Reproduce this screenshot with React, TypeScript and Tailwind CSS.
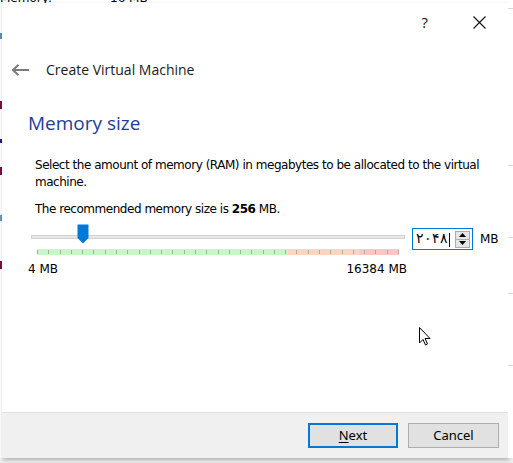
import type { FC } from 'react';

const TICKS = Array.from({ length: 33 }, (_, i) => i);

const SpinArrows: FC = () => (
  <div className="flex flex-col w-[15px] h-[17px] border border-[#adadad] bg-[#e6e6e6]">
    <div className="flex-1 flex items-center justify-center border-b border-[#adadad]">
      <svg width="7" height="4" viewBox="0 0 7 4">
        <path d="M0 4 L3.5 0 L7 4 Z" fill="#000" />
      </svg>
    </div>
    <div className="flex-1 flex items-center justify-center">
      <svg width="7" height="4" viewBox="0 0 7 4">
        <path d="M0 0 L3.5 4 L7 0 Z" fill="#000" />
      </svg>
    </div>
  </div>
);

const App: FC = () => {
  return (
    <div className="relative w-[513px] h-[463px] overflow-hidden bg-white" style={{ fontFamily: '"Open Sans", "Noto Sans", sans-serif' }}>
      {/* --- BACKGROUND WINDOW SLIVER --- */}
      <div className="h-[3px] overflow-hidden text-[12px] text-black" style={{ fontFamily: '"DejaVu Sans", sans-serif' }}>
        <div className="flex -mt-[11px]">
          <span className="w-[110px]">Memory:</span>
          <span>16 MB</span>
        </div>
      </div>

      <div className="flex h-[455px]">
        <div className="w-[2px] flex flex-col">
          <div className="h-[30px]" />
          <div className="h-[6px] bg-[#5c8fb5]" />
          <div className="h-[62px]" />
          <div className="h-[8px] bg-[#7a1040]" />
          <div className="h-[30px]" />
          <div className="h-[4px] bg-[#1a237e]" />
          <div className="h-[24px]" />
          <div className="h-[8px] bg-[#7a1040]" />
          <div className="h-[40px]" />
          <div className="h-[6px] bg-[#6a9cc0]" />
          <div className="h-[40px]" />
          <div className="h-[8px] bg-[#7a1040]" />
          <div className="flex-1" />
        </div>

        {/* --- DIALOG --- */}
        <div className="w-[506px] flex flex-col bg-white shadow-[1px_2px_4px_rgba(0,0,0,0.25)]">
          <div className="h-[39px] flex items-center justify-end pr-[22px] gap-[45px] text-[#111]">
            <span className="text-[15px] leading-none">?</span>
            <svg width="13" height="13" viewBox="0 0 13 13">
              <path d="M0.5 0.5 L12.5 12.5 M12.5 0.5 L0.5 12.5" stroke="#111" strokeWidth="1.1" />
            </svg>
          </div>

          <div className="h-[14px]" />
          <div className="flex items-center h-[28px] pl-[10px]">
            <svg width="18" height="12" viewBox="0 0 18 12">
              <path d="M1 6 H17 M6.5 0.8 L1 6 L6.5 11.2" stroke="#7c7c7c" strokeWidth="2" fill="none" />
            </svg>
            <span className="ml-[16px] text-[14px] text-[#1a1a1a] leading-none">Create Virtual Machine</span>
          </div>

          <div className="pl-[26px] mt-[25px] text-[19px] leading-[28px] text-[#1d3d96]">Memory size</div>

          <div className="flex flex-col pl-[33px] mt-[20px] text-[12px] text-black" style={{ fontFamily: '"DejaVu Sans", sans-serif' }}>
            <p className="leading-[17px] tracking-[-0.47px]">
              Select the amount of memory (RAM) in megabytes to be allocated to the virtual
              <br />
              machine.
            </p>
            <p className="mt-[10px] leading-[17px] tracking-[-0.47px]">
              The recommended memory size is <b>256</b> MB.
            </p>

            {/* --- SLIDER ROW --- */}
            <div className="flex items-start mt-[8px] -ml-[4px]">
              <div className="flex flex-col w-[376px]">
                <div className="relative h-[22px] flex items-center">
                  <div className="w-[374px] h-[4px] bg-[#e7e7e7] border border-[#d3d3d3]" />
                  <svg className="absolute left-[46px] top-[-2px]" width="12" height="20" viewBox="0 0 12 20">
                    <path d="M1 0.5 H11 Q11.5 0.5 11.5 1 V14 L6 19.5 L0.5 14 V1 Q0.5 0.5 1 0.5 Z" fill="#0078d7" />
                  </svg>
                </div>
                <div className="relative ml-[6px] w-[362px] h-[6px] mt-[1px] flex">
                  <div className="w-[251px] bg-[#c7f7c7]" />
                  <div className="w-[72px] bg-[#fdd5c2]" />
                  <div className="flex-1 bg-[#fcc6c6]" />
                  <div className="absolute inset-0 flex justify-between">
                    {TICKS.map((t) => (
                      <div key={t} className="w-px h-[4px] mt-px bg-[#a8b09c]" />
                    ))}
                  </div>
                </div>
                <div className="flex justify-between mt-[7px] -ml-[3px] leading-[14px]">
                  <span>4 MB</span>
                  <span>16384 MB</span>
                </div>
              </div>

              <div className="flex items-center ml-[5px] mt-[2px] w-[61px] h-[22px] border border-[#0078d7] pl-[3px] pr-[2px]">
                <span className="flex-1 text-[14px] leading-none" style={{ fontFamily: '"Noto Sans", sans-serif' }}>
                  ۲۰۴۸<span className="inline-block w-px h-[14px] bg-black align-middle ml-px" />
                </span>
                <SpinArrows />
              </div>
              <span className="ml-[7px] mt-[5px] leading-[17px]">MB</span>
            </div>
          </div>

          <div className="flex-1" />

          {/* --- FOOTER --- */}
          <div className="h-[46px] bg-[#f0f0f0] border-t border-[#dfdfdf] flex items-center justify-end gap-[10px] pr-[9px] text-[13px] text-black" style={{ fontFamily: '"Noto Sans", sans-serif' }}>
            <button className="w-[90px] h-[25px] bg-[#e1e1e1] border-2 border-[#0078d7] leading-none">
              <span className="underline underline-offset-2">N</span>ext
            </button>
            <button className="w-[91px] h-[25px] bg-[#e1e1e1] border border-[#adadad] leading-none">Cancel</button>
          </div>
        </div>

        <div className="flex-1 flex flex-col bg-white">
          <div className="h-[5px]" />
          <div className="h-px bg-[#d9d9d9]" />
          <div className="h-[156px]" />
          <div className="h-px bg-[#d9d9d9]" />
          <div className="h-[71px]" />
          <div className="h-px bg-[#d9d9d9]" />
          <div className="h-[55px]" />
          <div className="h-px bg-[#d9d9d9]" />
          <div className="h-[71px]" />
          <div className="h-px bg-[#d9d9d9]" />
        </div>
      </div>
      <div className="h-[5px] bg-[#ededed]" />

      {/* --- MOUSE CURSOR --- */}
      <svg className="absolute left-[419px] top-[327px]" width="12" height="19" viewBox="0 0 12 19">
        <path d="M0.5 0.5 V16 L4 12.5 L6.5 18 L8.5 17 L6 11.5 H11 Z" fill="#fff" stroke="#000" strokeWidth="1" strokeLinejoin="miter" />
      </svg>
    </div>
  );
};

export default App;
